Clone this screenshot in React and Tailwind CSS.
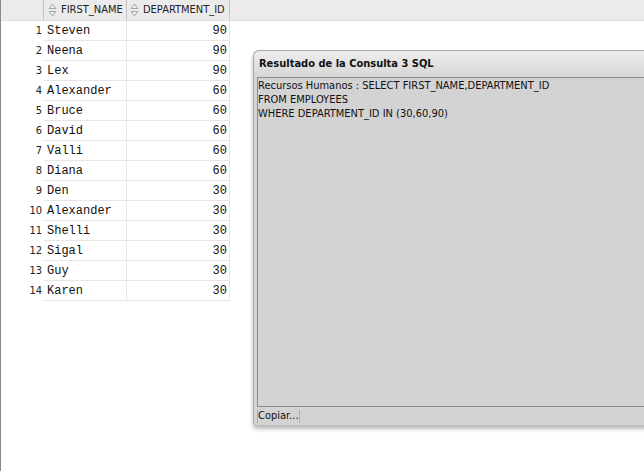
import React from "react";

const rows = [
  [1, "Steven", 90],
  [2, "Neena", 90],
  [3, "Lex", 90],
  [4, "Alexander", 60],
  [5, "Bruce", 60],
  [6, "David", 60],
  [7, "Valli", 60],
  [8, "Diana", 60],
  [9, "Den", 30],
  [10, "Alexander", 30],
  [11, "Shelli", 30],
  [12, "Sigal", 30],
  [13, "Guy", 30],
  [14, "Karen", 30],
];

const tahoma = "'DejaVu Sans Condensed', 'DejaVu Sans', Tahoma, sans-serif";
const mono = "'Liberation Mono', 'Courier New', monospace";

function SortIcon() {
  return (
    <svg width="9" height="14" viewBox="0 0 9 14" className="shrink-0">
      <path d="M4.5 1 L8 5.5 L1 5.5 Z" fill="none" stroke="#a8a8a8" strokeWidth="1" />
      <path d="M4.5 13 L8 8.5 L1 8.5 Z" fill="none" stroke="#a8a8a8" strokeWidth="1" />
    </svg>
  );
}

export default function App() {
  return (
    <div className="relative w-[644px] h-[471px] overflow-hidden bg-white border-l border-[#8a8a8a]" style={{ fontFamily: tahoma }}>
      {/* header */}
      <div className="flex h-[21px] bg-[#ebebeb] border-b border-[#e0e0e0]">
        <div className="w-[43px] border-r border-[#c4c4c4]" />
        <div className="w-[83px] flex items-center gap-[4px] pl-[4px] border-r border-[#c4c4c4] text-[11px] text-[#222] whitespace-nowrap overflow-hidden">
          <SortIcon />
          <span>FIRST_NAME</span>
        </div>
        <div className="w-[103px] flex items-center gap-[4px] pl-[3px] border-r border-[#c4c4c4] text-[11px] text-[#222] whitespace-nowrap overflow-hidden">
          <SortIcon />
          <span>DEPARTMENT_ID</span>
        </div>
      </div>
      {/* rows */}
      <div className="flex flex-col">
        {rows.map(([n, name, d]) => (
          <div key={n} className="flex h-[20px]">
            <div className="w-[43px] flex items-center justify-end pr-[2px] text-[11px] text-[#222]">{n}</div>
            <div className="w-[83px] flex items-center pl-[3px] border-r border-b border-[#e6e6e6] text-[12px] text-[#111]" style={{ fontFamily: mono }}>
              {name}
            </div>
            <div className="w-[103px] flex items-center justify-end pr-[2px] border-r border-b border-[#e6e6e6] text-[12px] text-[#111]" style={{ fontFamily: mono }}>
              {d}
            </div>
          </div>
        ))}
      </div>

      {/* dialog */}
      <div className="absolute left-[252px] top-[50px] w-[420px] h-[375px] flex flex-col bg-[#d3d3d3] rounded-tl-[6px] rounded-bl-[4px] border-l border-t border-[#a9a9a9] shadow-[0_4px_4px_rgba(0,0,0,0.28)]">
        <div className="h-[26px] shrink-0 flex items-center pl-[5px] rounded-tl-[6px] bg-gradient-to-b from-[#eeeeee] to-[#d6d6d6] text-[11px] font-bold text-[#111]">
          Resultado de la Consulta 3 SQL
        </div>
        <div className="flex-1 flex flex-col pl-[3px]">
          <div className="h-[330px] border-l border-t border-b border-[#8c8c8c] pt-[1px] text-[11px] leading-[14px] text-[#111] bg-[#d3d3d3]">
            <div>Recursos Humanos : SELECT FIRST_NAME,DEPARTMENT_ID</div>
            <div>FROM EMPLOYEES</div>
            <div>WHERE DEPARTMENT_ID IN (30,60,90)</div>
          </div>
          <div className="h-[18px] flex items-center">
            <span className="h-[13px] flex items-center border-l border-r border-[#f5a623] text-[11px] text-[#111]">Copiar...</span>
          </div>
        </div>
      </div>
    </div>
  );
}
